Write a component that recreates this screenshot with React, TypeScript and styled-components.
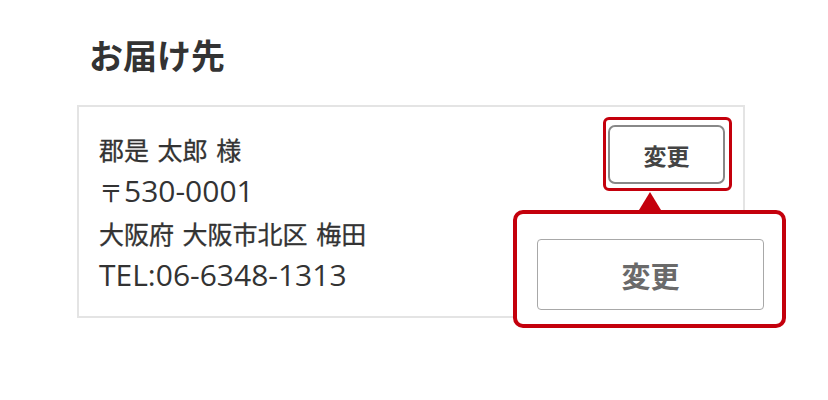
import React from "react";
import styled, { createGlobalStyle } from "styled-components";

const GlobalStyle = createGlobalStyle`
  body {
    margin: 0;
    background: #ffffff;
    font-family: "Noto Sans CJK JP", "Noto Sans", sans-serif;
    color: #333333;
  }
`;

const accent = "#c4000c";

const Page = styled.div`
  width: 828px;
  height: 400px;
  box-sizing: border-box;
  padding: 35px 0 0 77px;
`;

const Title = styled.h2`
  margin: 0 0 30px 12px;
  font-size: 34px;
  line-height: 40px;
  font-weight: 700;
  color: #333333;
`;

const Card = styled.div`
  width: 668px;
  box-sizing: border-box;
  border: 2px solid #e4e4e4;
  background: #ffffff;
  display: flex;
  justify-content: space-between;
  align-items: flex-start;
  padding: 18px 18px 20px 20px;
`;

const AddressList = styled.div`
  display: flex;
  flex-direction: column;
  padding-top: 3px;
`;

const Line = styled.p<{ $latin?: boolean }>`
  margin: 0;
  height: 42px;
  line-height: 42px;
  white-space: nowrap;
  color: #333333;
  font-family: ${(p) =>
    p.$latin
      ? `"Open Sans", "Noto Sans CJK JP", sans-serif`
      : `"Noto Sans CJK JP", sans-serif`};
  font-size: ${(p) => (p.$latin ? "30px" : "25px")};
  font-weight: 400;
  word-spacing: ${(p) => (p.$latin ? "0" : "3px")};
  -webkit-text-stroke: ${(p) => (p.$latin ? "0" : "0.3px #333333")};
`;

const PostMark = styled.span`
  font-family: "Noto Sans CJK JP", sans-serif;
  font-size: 24px;
  margin-right: 1px;
`;

const ButtonArea = styled.div`
  position: relative;
`;

const SmallButton = styled.button`
  display: block;
  width: 117px;
  height: 59px;
  box-sizing: border-box;
  border: 2px solid #888888;
  border-radius: 7px;
  background: #ffffff;
  font-family: "Noto Sans CJK JP", sans-serif;
  font-size: 23px;
  font-weight: 700;
  color: #444444;
  padding: 0;
`;

const Highlight = styled.div`
  position: absolute;
  top: -8px;
  right: -7px;
  bottom: -7px;
  left: -5px;
  border: 3px solid ${accent};
  border-radius: 6px;
  pointer-events: none;
`;

const Callout = styled.div`
  position: absolute;
  left: -95px;
  top: 85px;
  width: 273px;
  height: 118px;
  box-sizing: border-box;
  border: 4px solid ${accent};
  border-radius: 10px;
  background: #ffffff;
  padding: 25px 18px 0 20px;

  &::before {
    content: "";
    position: absolute;
    top: -22px;
    left: 50%;
    transform: translateX(-50%);
    border-left: 11px solid transparent;
    border-right: 11px solid transparent;
    border-bottom: 18px solid ${accent};
  }
`;

const LargeButton = styled.button`
  display: block;
  width: 227px;
  height: 71px;
  box-sizing: border-box;
  border: 1px solid #a8a8a8;
  border-radius: 4px;
  background: #ffffff;
  font-family: "Noto Sans CJK JP", sans-serif;
  font-size: 29px;
  font-weight: 700;
  color: #6a6a6a;
  padding: 0;
`;

export default function App() {
  return (
    <>
      <GlobalStyle />
      <Page>
        <Title>お届け先</Title>
        <Card>
          <AddressList>
            <Line>郡是 太郎 様</Line>
            <Line $latin>
              <PostMark>〒</PostMark>530-0001
            </Line>
            <Line>大阪府 大阪市北区 梅田</Line>
            <Line $latin>TEL:06-6348-1313</Line>
          </AddressList>
          <ButtonArea>
            <SmallButton>変更</SmallButton>
            <Highlight />
            <Callout>
              <LargeButton>変更</LargeButton>
            </Callout>
          </ButtonArea>
        </Card>
      </Page>
    </>
  );
}
